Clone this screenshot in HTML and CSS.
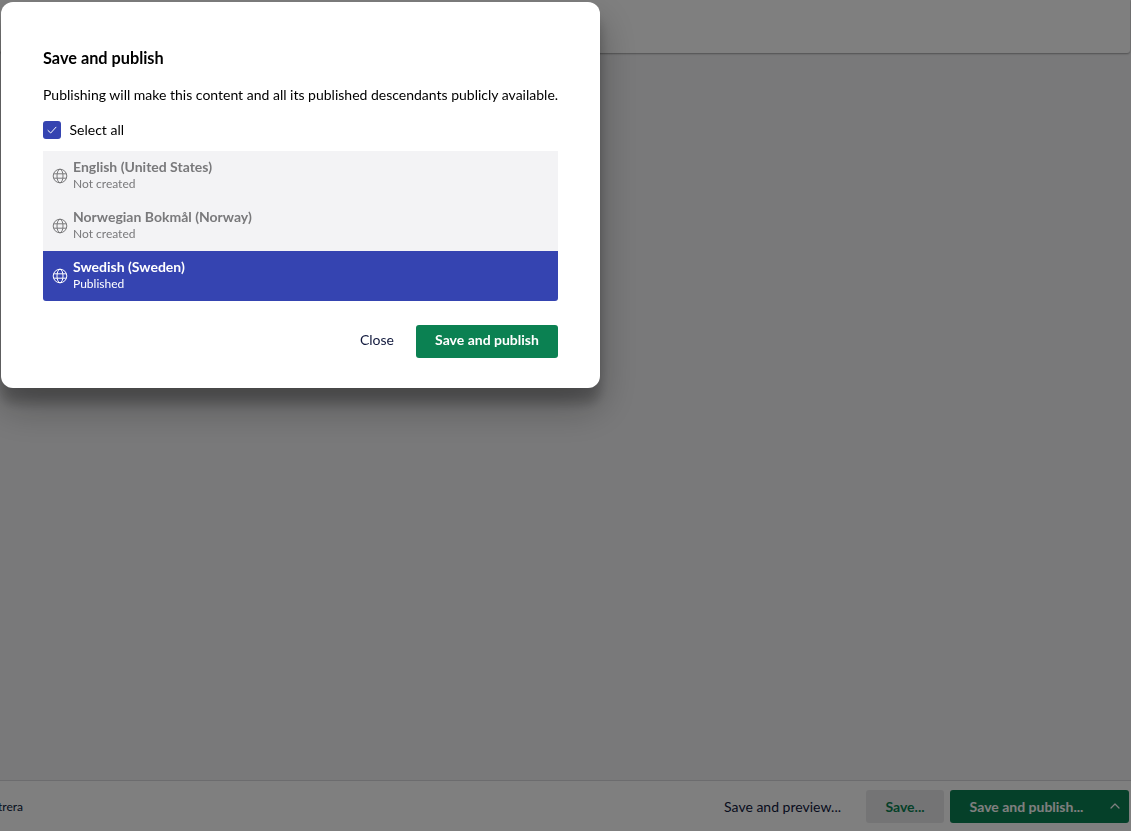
FILE: index.html
```html
<!DOCTYPE html>
<html lang="en">
<head>
<meta charset="utf-8">
<title>Save and publish</title>
<link rel="stylesheet" href="styles.css">
</head>
<body>
<div class="app">
  <header class="top-bar"></header>
  <main class="content"></main>
  <footer class="actions">
    <span class="actions-left">trera</span>
    <div class="actions-right">
      <button class="btn btn-link">Save and preview...</button>
      <button class="btn btn-soft">Save...</button>
      <div class="split">
        <button class="btn btn-green split-main">Save and publish...</button>
        <button class="btn btn-green split-caret" aria-label="More">
          <svg width="12" height="12" viewBox="0 0 12 12" fill="none" stroke="currentColor" stroke-width="1.2" stroke-linecap="round" stroke-linejoin="round"><path d="M2 8l4-4 4 4"/></svg>
        </button>
      </div>
    </div>
  </footer>
</div>
<div class="backdrop"></div>
<section class="dialog">
  <h1 class="dialog-title">Save and publish</h1>
  <p class="dialog-text">Publishing will make this content and all its published descendants publicly available.</p>
  <label class="select-all">
    <span class="check">
      <svg width="12" height="12" viewBox="0 0 12 12" fill="none" stroke="#fff" stroke-width="1" stroke-linecap="round" stroke-linejoin="round"><path d="M2 6.5l2.7 2.5L10 3.2"/></svg>
    </span>
    Select all
  </label>
  <ul class="langs">
    <li class="lang">
      <svg class="globe" width="16" height="16" viewBox="0 0 16 16" fill="none" stroke="currentColor" stroke-width="1"><circle cx="8" cy="8" r="6.8"/><ellipse cx="8" cy="8" rx="3" ry="6.8"/><path d="M1.6 5.8h12.8M1.6 10.2h12.8"/></svg>
      <div class="lang-text"><strong class="lang-name">English (United States)</strong><span class="lang-state">Not created</span></div>
    </li>
    <li class="lang">
      <svg class="globe" width="16" height="16" viewBox="0 0 16 16" fill="none" stroke="currentColor" stroke-width="1"><circle cx="8" cy="8" r="6.8"/><ellipse cx="8" cy="8" rx="3" ry="6.8"/><path d="M1.6 5.8h12.8M1.6 10.2h12.8"/></svg>
      <div class="lang-text"><strong class="lang-name">Norwegian Bokmål (Norway)</strong><span class="lang-state">Not created</span></div>
    </li>
    <li class="lang lang-selected">
      <svg class="globe" width="16" height="16" viewBox="0 0 16 16" fill="none" stroke="currentColor" stroke-width="1"><circle cx="8" cy="8" r="6.8"/><ellipse cx="8" cy="8" rx="3" ry="6.8"/><path d="M1.6 5.8h12.8M1.6 10.2h12.8"/></svg>
      <div class="lang-text"><strong class="lang-name">Swedish (Sweden)</strong><span class="lang-state">Published</span></div>
    </li>
  </ul>
  <div class="dialog-actions">
    <button class="btn btn-link dialog-close">Close</button>
    <button class="btn btn-green dialog-save">Save and publish</button>
  </div>
</section>
</body>
</html>
```
FILE: styles.css
```css
* { box-sizing: border-box; }
html, body { height: 100%; margin: 0; }
body {
  background: #f3f3f5;
  color: #000;
  font-family: Lato, "Open Sans", sans-serif;
  font-size: 14px;
  overflow: hidden;
}
.app { display: flex; flex-direction: column; height: 831px; }
.top-bar {
  height: 53px;
  margin-right: 1px;
  background: #fff;
  border-radius: 0 0 3px 3px;
  box-shadow: 0 1px 2px rgba(0, 0, 0, .35);
}
.content { flex: 1; }
.actions {
  height: 51px;
  display: flex;
  align-items: center;
  justify-content: space-between;
  background: #fff;
  border-top: 1px solid #d8d8dc;
  padding-right: 2px;
}
.actions-left { margin-left: -2px; font-size: 12px; color: #0b1a3c; }
.actions-right { display: flex; align-items: center; gap: 6px; }
.btn {
  border: 0;
  font-family: inherit;
  font-size: 14px;
  line-height: 17px;
  border-radius: 3px;
  cursor: pointer;
  background: none;
  padding: 0;
}
.btn-link { color: #10183c; padding: 0 19px; height: 33px; white-space: nowrap; }
.btn-soft { width: 78px; height: 33px; background: #e9e9eb; color: #0b8152; font-weight: 700; }
.btn-green { background: #0b8152; color: #fff; font-weight: 700; }
.split { display: flex; }
.split-main { width: 150px; height: 33px; border-radius: 3px 0 0 3px; padding-left: 3px; }
.split-caret {
  width: 29px;
  height: 33px;
  border-radius: 0 3px 3px 0;
  display: flex;
  align-items: center;
  justify-content: center;
}
.backdrop { position: fixed; inset: 0; background: rgba(0, 0, 0, .5); }
.dialog {
  position: fixed;
  left: 1px;
  top: 2px;
  width: 599px;
  height: 386px;
  padding: 46px 42px 30px;
  background: #fff;
  border-radius: 12px;
  box-shadow: 0 19px 38px rgba(0, 0, 0, .3), 0 15px 12px rgba(0, 0, 0, .22);
  display: flex;
  flex-direction: column;
}
.dialog-title { margin: 0; font-size: 16.3px; line-height: 20px; font-weight: 700; }
.dialog-text { margin: 17px 0 0; font-size: 14px; line-height: 20px; white-space: nowrap; }
.select-all { display: flex; align-items: center; gap: 8.5px; margin-top: 15px; height: 20px; line-height: 20px; }
.check {
  width: 18px;
  height: 18px;
  border-radius: 3px;
  background: #3544b1;
  display: flex;
  align-items: center;
  justify-content: center;
}
.langs { list-style: none; margin: 11px 0 0; padding: 0; }
.lang {
  height: 50px;
  display: flex;
  align-items: center;
  gap: 5px;
  padding: 0 9px;
  background: #f3f3f5;
  color: #79797b;
}
.lang-selected { background: #3544b1; color: #fff; border-radius: 0 0 3px 3px; }
.lang-text { display: flex; flex-direction: column; padding-bottom: 1px; }
.lang-name { font-size: 14px; line-height: 17px; font-weight: 700; }
.lang-state { font-size: 12px; line-height: 18px; }
.dialog-actions { display: flex; justify-content: flex-end; align-items: center; gap: 3px; margin-top: 24px; }
.dialog-close { padding-bottom: 5px; }
.dialog-save { width: 142px; height: 33px; padding-bottom: 5px; }
```
